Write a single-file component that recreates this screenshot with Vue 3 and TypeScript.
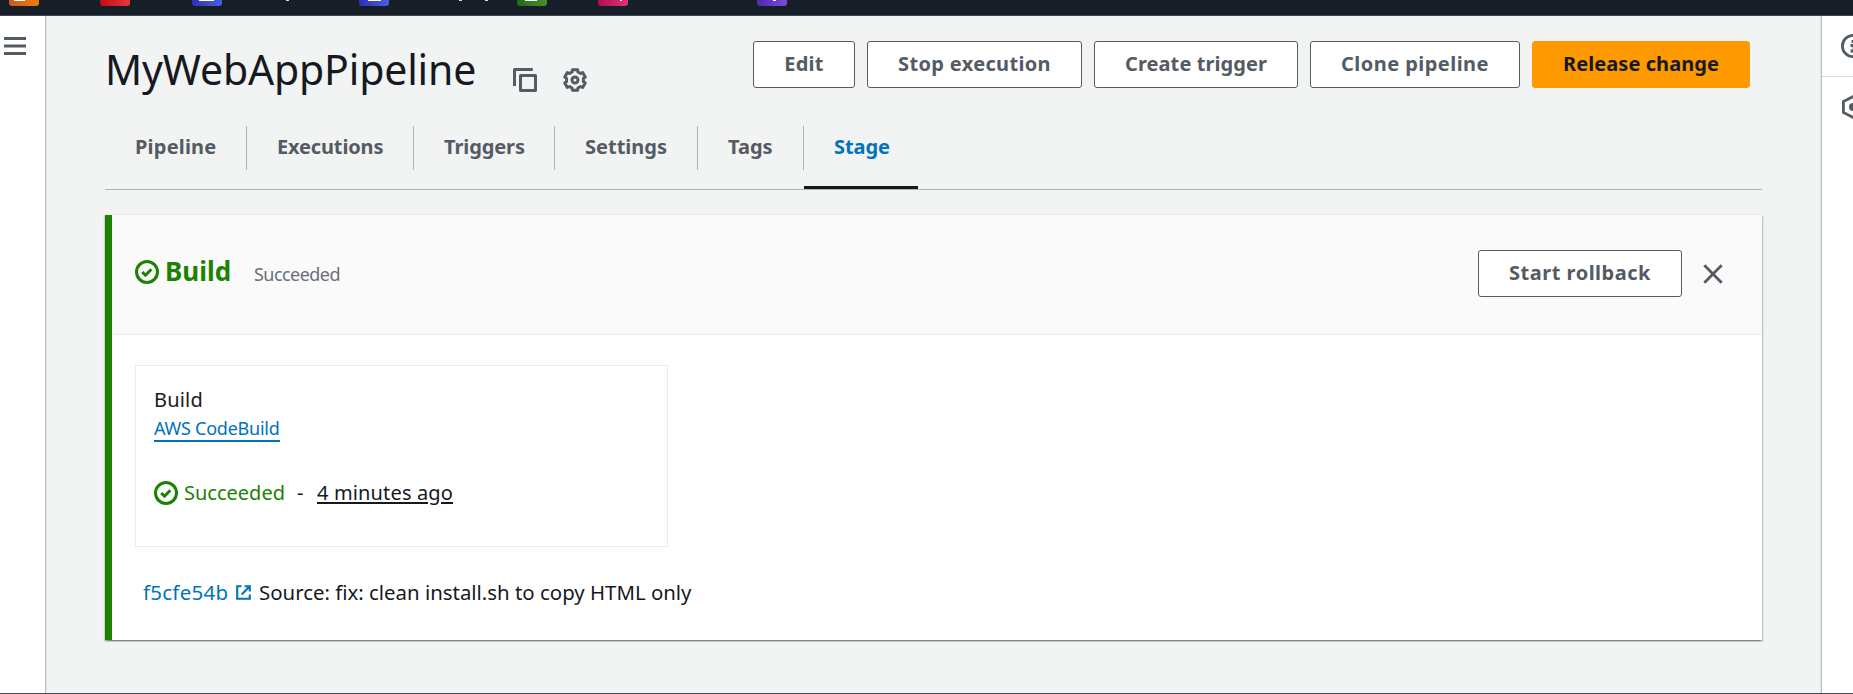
<script setup lang="ts">
interface Service { name: string; left: number; glyph: number; offset: number }
interface Item { label: string; key: string }

const services: Service[] = [
  { name: 'orange', left: 9, glyph: 11, offset: 5 },
  { name: 'red', left: 100, glyph: 0, offset: 0 },
  { name: 'blue', left: 192, glyph: 15, offset: 7 },
  { name: 'blue', left: 359, glyph: 13, offset: 9 },
  { name: 'green', left: 517, glyph: 12, offset: 8 },
  { name: 'pink', left: 598, glyph: 2, offset: 22 },
  { name: 'purple', left: 757, glyph: 3, offset: 16 },
]
const ticks: number[] = [286, 459, 485]

const actions: Item[] = [
  { label: 'Edit', key: 'edit' },
  { label: 'Stop execution', key: 'stop' },
  { label: 'Create trigger', key: 'trigger' },
  { label: 'Clone pipeline', key: 'clone' },
  { label: 'Release change', key: 'release' },
]
const tabs: Item[] = [
  { label: 'Pipeline', key: 'pipeline' },
  { label: 'Executions', key: 'executions' },
  { label: 'Triggers', key: 'triggers' },
  { label: 'Settings', key: 'settings' },
  { label: 'Tags', key: 'tags' },
  { label: 'Stage', key: 'stage' },
]
const activeTab = 'stage'

// Six-toothed gear outline centred in a 16-unit box
const gearPoints = Array.from({ length: 6 }, (_, i) => i * 60 - 90)
  .flatMap((a) => [[a - 20, 5.7], [a - 14, 7.1], [a + 14, 7.1], [a + 20, 5.7]])
  .map(([deg, r]) => {
    const t = (deg * Math.PI) / 180
    return `${(8 + r * Math.cos(t)).toFixed(2)},${(8 + r * Math.sin(t)).toFixed(2)}`
  })
  .join(' ')
</script>

<template>
  <div class="page">
    <header class="topbar">
      <span v-for="s in services" :key="s.left" class="service" :class="s.name" :style="{ left: s.left + 'px' }">
        <i :style="{ left: s.offset + 'px', width: s.glyph + 'px' }"></i>
      </span>
      <span v-for="t in ticks" :key="t" class="tick" :style="{ left: t + 'px' }"></span>
    </header>

    <div class="body">
      <nav class="side">
        <svg class="burger" viewBox="0 0 22 18"><path d="M0 1.5h22M0 9h22M0 16.5h22" /></svg>
      </nav>

      <main class="main">
        <div class="head">
          <h1>MyWebAppPipeline</h1>
          <svg class="icon copy" viewBox="0 0 16 16"><path d="M13.2 1H1v11" /><rect x="5" y="5" width="10" height="10" /></svg>
          <svg class="icon gear" viewBox="0 0 16 16"><polygon :points="gearPoints" /><circle cx="8" cy="8" r="2" /></svg>
          <div class="actions">
            <button v-for="a in actions" :key="a.key" class="btn" :class="a.key">{{ a.label }}</button>
          </div>
        </div>

        <ul class="tabs">
          <li v-for="t in tabs" :key="t.key" :class="[t.key, { active: t.key === activeTab }]"><span>{{ t.label }}</span></li>
        </ul>

        <section class="card">
          <div class="card-head">
            <svg class="icon ok" viewBox="0 0 16 16"><circle cx="8" cy="8" r="7" /><path d="m4.8 8 2.2 2.2 3.9-4" /></svg>
            <h2>Build</h2>
            <span class="state">Succeeded</span>
            <button class="btn rollback">Start rollback</button>
            <svg class="close" viewBox="0 0 20 20"><path d="M1.3 1.3l17.4 17.4M18.7 1.3L1.3 18.7" /></svg>
          </div>
          <div class="card-body">
            <div class="action">
              <div class="name">Build</div>
              <a class="provider">AWS CodeBuild</a>
              <div class="status">
                <svg class="icon ok" viewBox="0 0 16 16"><circle cx="8" cy="8" r="7" /><path d="m4.8 8 2.2 2.2 3.9-4" /></svg>
                <span class="done">Succeeded</span>
                <span class="dash">-</span>
                <span class="ago">4 minutes ago</span>
              </div>
            </div>
            <div class="commit">
              <a class="hash">f5cfe54b</a>
              <svg class="ext" viewBox="0 0 15 15"><path d="M5.5 1.2H1.2v12.6h12.6V9.5M8.5 1.2h5.3v5.3M13.6 1.4L5.6 9.4" /></svg>
              <span class="message">Source: fix: clean install.sh to copy HTML only</span>
            </div>
          </div>
        </section>
      </main>

      <aside class="tools">
        <div class="tool first">
          <svg viewBox="0 0 24 24"><circle cx="12" cy="12" r="10.6" /><path d="M9.5 11.5h3.5v5M9.5 17h6M10.5 7.5h3" /></svg>
        </div>
        <div class="tool">
          <svg viewBox="0 0 24 24"><path d="M12 1.6l9.6 5v10.8l-9.6 5-9.6-5V6.6z" /><circle class="dot" cx="12" cy="12" r="4" /></svg>
        </div>
      </aside>
    </div>
  </div>
</template>

<style>
body { margin: 0; overflow: hidden; }
</style>

<style scoped>
.page {
  box-sizing: border-box;
  height: 694px;
  width: 1853px;
  display: flex;
  flex-direction: column;
  overflow: hidden;
  border-bottom: 1px solid #4b4a5a;
  background: #f2f3f3;
  color: #16191f;
  font-family: "Noto Sans", "Open Sans", sans-serif;
  font-size: 20px;
}
.topbar {
  position: relative;
  box-sizing: border-box;
  flex: none;
  height: 16px;
  background: #161e27;
  border-bottom: 1px solid #414750;
}
.service {
  position: absolute;
  top: 0;
  width: 30px;
  height: 6px;
  border-radius: 0 0 3px 3px;
}
.service i { position: absolute; top: 0; height: 1px; background: #fff; }
.orange { background: linear-gradient(90deg, #cf581c, #ed7c0c); }
.red { background: linear-gradient(90deg, #c20c18, #e5373f); }
.blue { background: linear-gradient(90deg, #322eb5, #4560e0); }
.green { background: linear-gradient(90deg, #226a16, #46902c); }
.pink { background: linear-gradient(90deg, #b80b50, #df3473); }
.purple { background: linear-gradient(90deg, #5129ae, #7b4bdd); }
.tick { position: absolute; top: 0; width: 3px; height: 1px; background: #d9dbe0; }

.body { display: flex; flex: 1; min-height: 0; }
.side {
  box-sizing: border-box;
  width: 46px;
  background: #fff;
  border-right: 1px solid #b9c0c0;
  box-shadow: 1px 0 0 #dfe3e3;
  padding: 21px 0 0 4px;
  z-index: 1;
}
.burger { display: block; width: 22px; height: 18px; fill: none; stroke: #545b64; stroke-width: 3; }
.main { flex: 1; padding: 25px 59px 0; }

.head { display: flex; align-items: flex-start; height: 85px; }
h1 {
  margin: 2px 0 0;
  width: 373px;
  font-size: 41px;
  line-height: 53px;
  font-weight: 400;
  letter-spacing: -0.16px;
  white-space: nowrap;
}
.icon { flex: none; width: 24px; height: 24px; fill: none; stroke: #545b64; stroke-width: 2; stroke-linejoin: round; }
.copy { margin: 27px 0 0 35px; }
.gear { margin: 27px 0 0 26px; }
.actions { display: flex; gap: 12px; margin-left: auto; padding-right: 12px; }
.btn {
  box-sizing: border-box;
  height: 47px;
  padding: 0 0 1px;
  border: 1px solid #545b64;
  border-radius: 3px;
  background: #fff;
  color: #545b64;
  font-family: inherit;
  font-size: 20px;
  font-weight: 700;
  line-height: 42px;
  white-space: nowrap;
}
.edit { width: 102px; letter-spacing: 0.3px; }
.stop { width: 215px; letter-spacing: 0.34px; }
.trigger { width: 204px; letter-spacing: 0.08px; }
.clone { width: 210px; letter-spacing: 0.46px; }
.release { width: 218px; letter-spacing: 0.07px; background: #ff9900; border-color: #ff9900; color: #16191f; }

.tabs {
  display: flex;
  margin: 0;
  padding: 0;
  list-style: none;
  border-bottom: 1px solid #aab7b8;
  height: 63px;
  color: #545b64;
  font-weight: 700;
}
.tabs li { box-sizing: border-box; height: 63px; white-space: nowrap; }
.tabs span {
  display: block;
  box-sizing: border-box;
  height: 44px;
  line-height: 42px;
  padding-left: 30px;
  border-right: 1px solid #aab7b8;
}
.pipeline { width: 142px; letter-spacing: 0.2px; }
.executions { width: 167px; letter-spacing: -0.15px; }
.triggers { width: 141px; letter-spacing: -0.1px; }
.settings { width: 143px; }
.tags { width: 106px; }
.stage { width: 114px; letter-spacing: -0.1px; }
.tabs .active { color: #0073bb; border-bottom: 3px solid #16191f; }
.tabs .active span { border-right: 0; }

.card {
  box-sizing: border-box;
  height: 426px;
  margin-top: 24px;
  border-top: 1px solid #eaeded;
  background: linear-gradient(#1d8102, #1d8102) 0 0 / 7px 100% no-repeat #fff;
  padding-left: 7px;
  box-shadow: 0 1.5px 1.5px rgba(0, 28, 36, 0.3), 1.5px 1.5px 1.5px rgba(0, 28, 36, 0.15), -1.5px 1.5px 1.5px rgba(0, 28, 36, 0.15);
}
.card-head {
  box-sizing: border-box;
  display: flex;
  height: 120px;
  padding: 0 39px 0 23px;
  align-items: flex-start;
  background: #fafafa;
  border-bottom: 1px solid #eaeded;
}
.ok { stroke: #1d8102; }
.card-head .ok { margin-top: 45px; }
h2 { margin: 36px 0 0 6px; width: 66px; font-size: 26px; line-height: 40px; font-weight: 700; color: #1d8102; }
.state { margin: 39px 0 0 23px; font-size: 18px; line-height: 40px; letter-spacing: -0.55px; color: #687078; }
.rollback { width: 204px; margin: 35px 0 0 auto; letter-spacing: 0.5px; }
.close { width: 20px; height: 20px; margin: 49px 0 0 21px; fill: none; stroke: #545b64; stroke-width: 2.8; }

.card-body { padding: 30px 0 0 23px; }
.action { box-sizing: border-box; width: 533px; height: 182px; padding: 19px 18px 0; border: 1px solid #eaeded; }
.name { line-height: 30px; letter-spacing: 0.2px; }
.provider {
  display: block;
  width: 126px;
  height: 25px;
  line-height: 26px;
  border-bottom: 2px solid #0073bb;
  color: #0073bb;
  font-size: 18px;
  letter-spacing: -0.25px;
  white-space: nowrap;
}
.status { display: flex; align-items: center; margin-top: 36px; height: 30px; line-height: 28px; }
.done { margin-left: 6px; width: 102px; color: #1d8102; }
.dash { margin-left: 11px; width: 20px; }
.ago { letter-spacing: 0.15px; text-decoration: underline; text-decoration-thickness: 2px; text-underline-offset: 2px; }
.commit { display: flex; align-items: center; height: 30px; margin-top: 30px; padding-left: 8px; font-size: 20.5px; white-space: nowrap; }
.hash { width: 86px; color: #0073bb; letter-spacing: 0.25px; }
.ext { width: 15px; height: 15px; margin: 0 7px; fill: none; stroke: #0073bb; stroke-width: 2.1; }
.message { margin-left: 1px; font-size: 20.4px; }

.tools { width: 31px; flex: none; overflow: hidden; background: #fff; border-left: 1px solid #b9c0c0; box-shadow: -1px 0 0 #e2e5e5; }
.tool { width: 61px; height: 60px; display: flex; align-items: center; justify-content: center; }
.tool.first { border-bottom: 1px solid #d5dbdb; }
.tool svg { width: 24px; height: 24px; fill: none; stroke: #545b64; stroke-width: 2.8; }
.tool .dot { fill: #545b64; stroke: none; }
</style>
